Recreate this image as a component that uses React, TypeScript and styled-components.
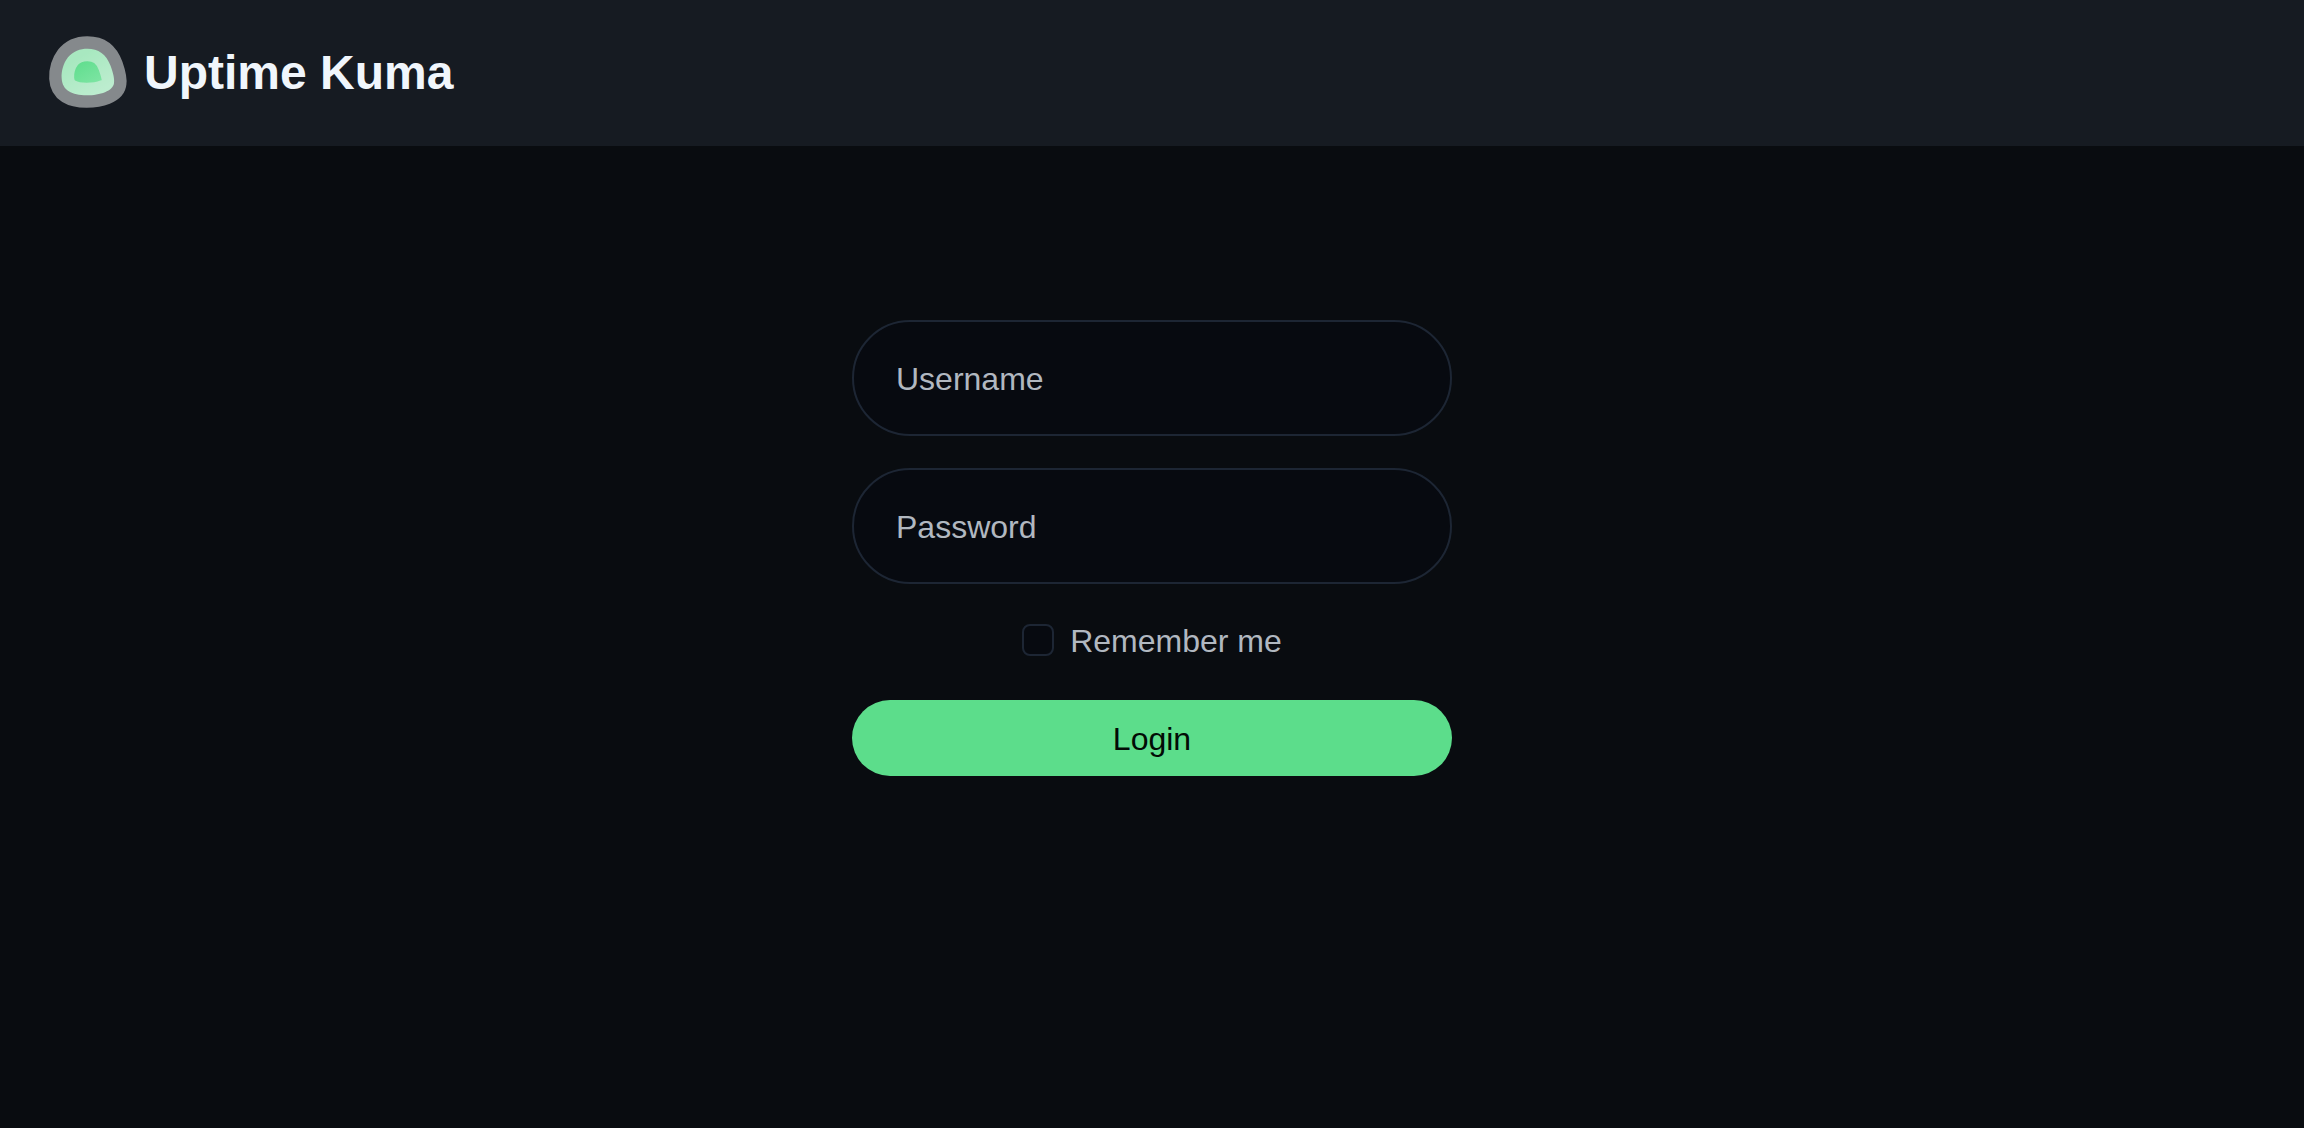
import React, { useState } from "react";
import styled, { createGlobalStyle } from "styled-components";

const GlobalStyle = createGlobalStyle`
  *, *::before, *::after { box-sizing: border-box; }
  body {
    margin: 0;
    background: #090c10;
    color: #b1b8c0;
    font-family: "Liberation Sans", Arial, sans-serif;
    font-size: 32px;
    line-height: 48px;
  }
`;

const Page = styled.div`
  min-height: 100vh;
  display: flex;
  flex-direction: column;
`;

const Header = styled.header`
  display: flex;
  align-items: center;
  padding: 32px 48px;
  background: #161b22;
  border-bottom: 2px solid #161b22;
`;

const Brand = styled.a`
  display: flex;
  align-items: center;
  gap: 16px;
  color: #f0f6fc;
  font-size: 48px;
  font-weight: 700;
  line-height: 72px;
  text-decoration: none;
`;

const BrandName = styled.span`
  padding-top: 2px;
`;

const Logo = styled.svg`
  display: block;
  width: 80px;
  height: 80px;
`;

const Main = styled.main`
  display: flex;
  justify-content: center;
  padding: 174px 32px 32px;
`;

const Form = styled.form`
  display: flex;
  flex-direction: column;
  gap: 32px;
  width: 100%;
  max-width: 600px;
`;

const Field = styled.input`
  width: 100%;
  height: 116px;
  padding: 2px 42px 0;
  border: 2px solid #1d2634;
  border-radius: 58px;
  background: #070a10;
  color: #b1b8c0;
  font: inherit;
  outline: none;

  &::placeholder {
    color: #b1b8c0;
    opacity: 1;
  }
  &:focus { border-color: #5cdd8b; }
`;

const Remember = styled.div`
  display: flex;
  align-items: center;
  justify-content: center;
  gap: 16px;
  padding-bottom: 4px;
`;

const RememberLabel = styled.label`
  height: 48px;
  padding-top: 1px;
`;

const Checkbox = styled.input`
  appearance: none;
  width: 32px;
  height: 32px;
  margin: 0;
  border: 2px solid #1d2634;
  border-radius: 8px;
  background: #070a10;

  &:checked { background: #5cdd8b; }
`;

const LoginButton = styled.button`
  width: 100%;
  padding: 15px 24px 13px;
  border: 0;
  border-radius: 50px;
  background: #5cdd8b;
  color: #020b05;
  font: inherit;
  cursor: pointer;
`;

export default function App() {
  const [username, setUsername] = useState("");
  const [password, setPassword] = useState("");
  const [remember, setRemember] = useState(false);

  return (
    <Page>
      <GlobalStyle />
      <Header>
        <Brand href="#">
          <Logo viewBox="0 0 240 240" aria-hidden="true">
            <defs>
              <linearGradient id="kuma" x1="0.3" y1="0.2" x2="0.75" y2="0.9">
                <stop offset="0" stopColor="#5cdd8b" />
                <stop offset="1" stopColor="#86e6a9" />
              </linearGradient>
            </defs>
            <path
              d="M118 50C151 50 175 66 188 102C196 125 200 141 198 153C196 177 156 190 116 190C72 190 43 176 41 139C40 118 45 96 60 76C75 57 97 50 118 50Z"
              fill="url(#kuma)"
              stroke="#f2f4f4"
              strokeOpacity="0.51"
              strokeWidth="75"
            />
          </Logo>
          <BrandName>Uptime Kuma</BrandName>
        </Brand>
      </Header>
      <Main>
        <Form onSubmit={(e) => e.preventDefault()}>
          <Field
            type="text"
            placeholder="Username"
            aria-label="Username"
            autoComplete="username"
            value={username}
            onChange={(e) => setUsername(e.target.value)}
          />
          <Field
            type="password"
            placeholder="Password"
            aria-label="Password"
            autoComplete="current-password"
            value={password}
            onChange={(e) => setPassword(e.target.value)}
          />
          <Remember>
            <Checkbox
              type="checkbox"
              id="remember"
              checked={remember}
              onChange={(e) => setRemember(e.target.checked)}
            />
            <RememberLabel htmlFor="remember">Remember me</RememberLabel>
          </Remember>
          <LoginButton type="submit">Login</LoginButton>
        </Form>
      </Main>
    </Page>
  );
}
